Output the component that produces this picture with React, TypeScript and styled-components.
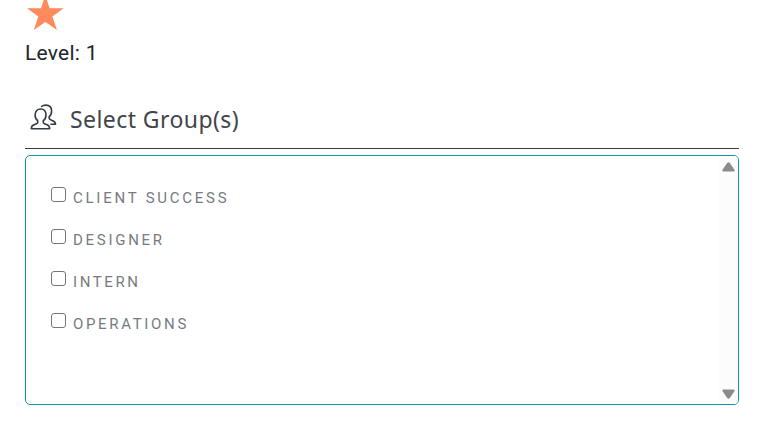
import React from "react";
import styled, { createGlobalStyle } from "styled-components";

const GlobalStyle = createGlobalStyle`
  * { box-sizing: border-box; }
  body { margin: 0; background: #fff; overflow: hidden; }
`;

const Page = styled.main`
  width: 759px;
  height: 436px;
  padding: 0 20px 0 25px;
  background: #fff;
  font-family: Roboto, sans-serif;
`;

const Star = styled.svg`
  display: block;
  width: 40px;
  height: 32px;
`;

const Level = styled.div`
  height: 40px;
  line-height: 42px;
  font-size: 21px;
  letter-spacing: 0.25px;
  color: #212529;
  white-space: nowrap;
`;

const Header = styled.header`
  display: flex;
  align-items: flex-start;
  height: 77px;
  padding: 30px 0 0 5px;
  border-bottom: 1px solid #343a40;
`;

const PeopleIcon = styled.svg`
  flex: none;
  width: 28px;
  height: 30px;
`;

const Title = styled.h1`
  margin: 0 0 0 12px;
  font: 400 23px/35px "Noto Sans", sans-serif;
  letter-spacing: 0.43px;
  color: #41464c;
  white-space: nowrap;
`;

const GroupBox = styled.section`
  display: flex;
  justify-content: space-between;
  height: 250px;
  margin-top: 6px;
  border: 1px solid #009b9f;
  border-radius: 5px;
  overflow: hidden;
`;

const Options = styled.div`
  padding: 20px 0 0 25px;
`;

const Option = styled.label`
  display: flex;
  align-items: center;
  height: 42px;
`;

const Checkbox = styled.input`
  appearance: none;
  flex: none;
  width: 15px;
  height: 15px;
  margin: 0 7px 5px 0;
  border: 1px solid #767676;
  border-radius: 3px;
  background: #fff;
`;

const OptionText = styled.span<{ $spacing: number }>`
  padding-top: 2px;
  font-size: 15px;
  line-height: 20px;
  letter-spacing: ${(p) => p.$spacing}px;
  color: #777b80;
  text-transform: uppercase;
  white-space: nowrap;
`;

const ScrollTrack = styled.div`
  display: flex;
  flex-direction: column;
  justify-content: space-between;
  align-items: center;
  width: 19px;
  padding: 5px 0 4px;
  background: #fcfcfc;
`;

const Arrow = styled.svg`
  display: block;
  width: 13px;
  height: 12px;
`;

const groups = [
  { name: "Client Success", spacing: 2.76 },
  { name: "Designer", spacing: 2.72 },
  { name: "Intern", spacing: 2.6 },
  { name: "Operations", spacing: 2.66 },
];

export default function App() {
  return (
    <Page>
      <GlobalStyle />
      <Star viewBox="0 0 40 32" aria-hidden="true">
        <path
          d="M20.3-5l4.3 13.3h14L27.4 16.4 32 30l-11.6-7.9L8.8 30l4.5-13.6L2 8.3h14z"
          fill="#ff8a5c"
        />
      </Star>
      <Level>Level: 1</Level>
      <Header>
        <PeopleIcon
          viewBox="0 0 28 30"
          fill="none"
          stroke="#343a40"
          strokeWidth="1.6"
          strokeLinejoin="round"
          strokeLinecap="round"
          aria-hidden="true"
        >
          <path d="M10.6 7c-3.6 0-5.5 2.5-5.5 6 0 2.7.9 4.5 2.6 5.7v1.8c0 1-1 1.4-3.2 2-2.1.7-3.2 1.6-3.2 4.2h18.4c0-2.6-1-3.5-3.2-4.2-2.2-.6-3.2-1-3.2-2v-1.8c1.7-1.2 2.7-3 2.7-5.7 0-3.5-2-6-5.4-6z" />
          <path d="M11.6 4.5c1-1 2.5-1.4 4.2-1.4 3.8 0 5.8 2.6 5.8 6 0 2.5-.8 4.5-2.5 5.8v1.4c0 1 1 1.4 3 2.1 2.2.7 3.4 1.6 3.4 3.9H21" />
        </PeopleIcon>
        <Title>Select Group(s)</Title>
      </Header>
      <GroupBox>
        <Options>
          {groups.map((group) => (
            <Option key={group.name}>
              <Checkbox type="checkbox" />
              <OptionText $spacing={group.spacing}>{group.name}</OptionText>
            </Option>
          ))}
        </Options>
        <ScrollTrack>
          <Arrow viewBox="0 0 13 12" aria-hidden="true">
            <path d="M5.2 2q1.3-1.6 2.6 0l4.5 6.6q1 2-1 2H1.7q-2 0-1-2z" fill="#8b8b8b" />
          </Arrow>
          <Arrow viewBox="0 0 13 12" aria-hidden="true">
            <path d="M5.2 10q1.3 1.6 2.6 0l4.5-6.6q1-2-1-2H1.7q-2 0-1 2z" fill="#8b8b8b" />
          </Arrow>
        </ScrollTrack>
      </GroupBox>
    </Page>
  );
}
